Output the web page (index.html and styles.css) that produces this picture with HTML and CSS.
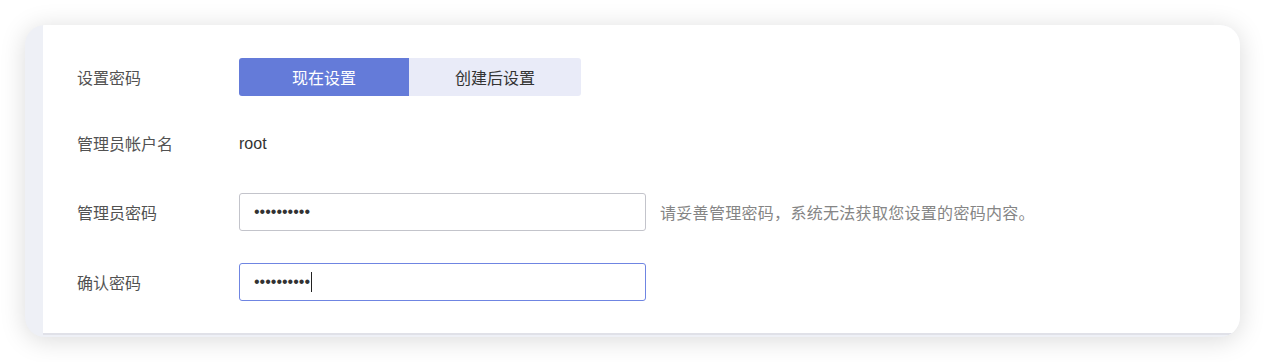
FILE: index.html
```html
<!DOCTYPE html>
<html lang="zh-CN">
<head>
<meta charset="utf-8">
<title>设置密码</title>
<link rel="stylesheet" href="styles.css">
</head>
<body>
<div class="page">
  <div class="card">
    <div class="strip"></div>
    <div class="panel">
      <div class="row row-1">
        <div class="label">设置密码</div>
        <div class="segmented">
          <button class="seg seg-active">现在设置</button>
          <button class="seg">创建后设置</button>
        </div>
      </div>
      <div class="row row-2">
        <div class="label">管理员帐户名</div>
        <div class="value">root</div>
      </div>
      <div class="row row-3">
        <div class="label">管理员密码</div>
        <div class="field"><span class="dots">••••••••••</span></div>
        <div class="hint">请妥善管理密码，系统无法获取您设置的密码内容。</div>
      </div>
      <div class="row row-4">
        <div class="label">确认密码</div>
        <div class="field field-focus"><span class="dots">••••••••••</span><span class="caret"></span></div>
      </div>
    </div>
  </div>
</div>
</body>
</html>
```

FILE: styles.css
```css
html, body {
  margin: 0;
  padding: 0;
  background: #ffffff;
}

body {
  font-family: "Liberation Sans", "Noto Sans CJK SC", sans-serif;
  font-size: 16px;
  color: #333;
}

.page {
  padding: 25px 25px 25px 25px;
}

.card {
  display: flex;
  width: 1215px;
  height: 312px;
  border-radius: 20px;
  overflow: hidden;
  background: #eef0f6;
  box-shadow: 0 3px 26px rgba(0, 0, 0, 0.15);
}

.strip {
  width: 18px;
  flex: none;
}

.panel {
  flex: 1;
  background: #ffffff;
  height: 310px;
  border-bottom: 2px solid #e0e1e8;
  padding: 33px 0 0 34px;
  box-sizing: border-box;
  display: flex;
  flex-direction: column;
}

.row {
  display: flex;
  align-items: center;
  height: 38px;
}

.row-1 { margin-bottom: 28px; }
.row-2 { margin-bottom: 31px; }
.row-3 { margin-bottom: 32px; }

.label {
  width: 162px;
  flex: none;
  color: #525252;
}

.segmented {
  display: flex;
  height: 38px;
  border-radius: 3px;
  overflow: hidden;
}

.seg {
  width: 172px;
  height: 38px;
  border: none;
  margin: 0;
  padding: 0;
  font: inherit;
  background: #e9ebf8;
  color: #333;
}

.seg-active {
  width: 170px;
  background: #647bd9;
  color: #ffffff;
}

.value {
  color: #333;
  margin-top: 2px;
}

.field {
  box-sizing: border-box;
  width: 407px;
  height: 38px;
  border: 1px solid #c3c4cb;
  border-radius: 3px;
  padding-left: 14px;
  display: flex;
  align-items: center;
  color: #333;
}

.field-focus {
  border-color: #6f85e2;
}

.dots {
  font-size: 16px;
}

.caret {
  width: 1px;
  height: 20px;
  background: #222;
  margin-left: 1px;
}

.hint {
  margin-left: 14px;
  color: #858585;
  letter-spacing: 0.3px;
}
```
